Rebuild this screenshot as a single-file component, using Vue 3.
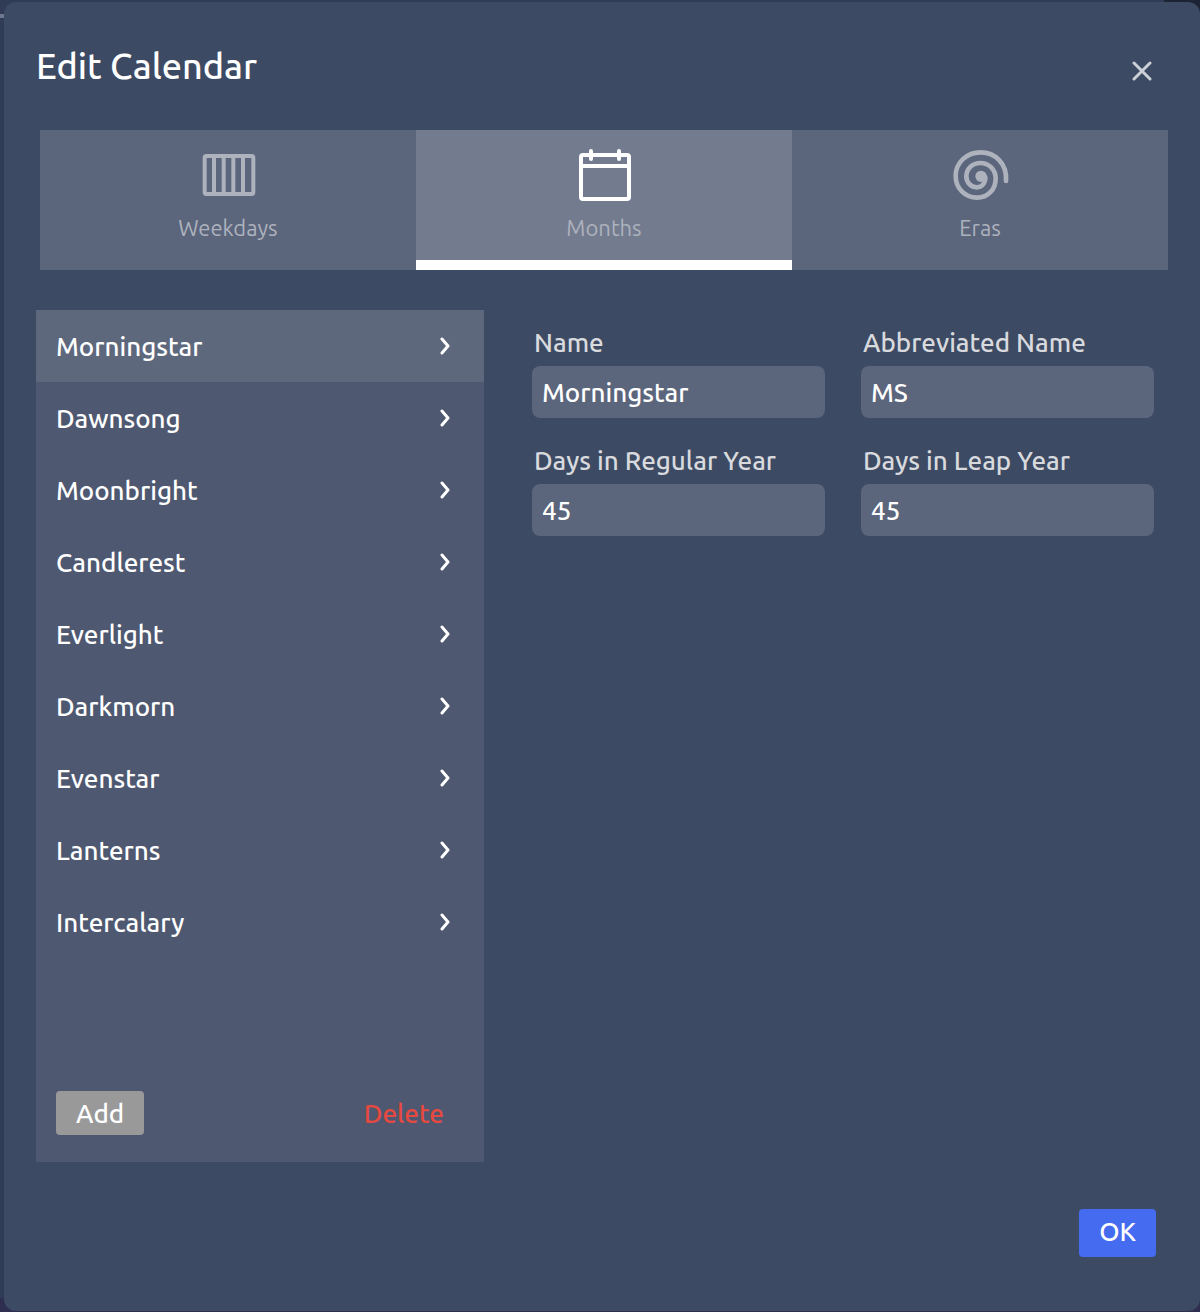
<script setup>
import { ref, computed } from 'vue'

const tabs = ['Weekdays', 'Months', 'Eras']
const activeTab = ref('Months')
const months = ref([
  { name: 'Morningstar', short: 'MS', days: '45', leap: '45' },
  { name: 'Dawnsong', short: 'DS', days: '45', leap: '45' },
  { name: 'Moonbright', short: 'MB', days: '45', leap: '45' },
  { name: 'Candlerest', short: 'CR', days: '45', leap: '45' },
  { name: 'Everlight', short: 'EL', days: '45', leap: '45' },
  { name: 'Darkmorn', short: 'DM', days: '45', leap: '45' },
  { name: 'Evenstar', short: 'ES', days: '45', leap: '45' },
  { name: 'Lanterns', short: 'LN', days: '45', leap: '45' },
  { name: 'Intercalary', short: 'IC', days: '5', leap: '6' },
])
const selected = ref(0)
const month = computed(() => months.value[selected.value])
const fields = [
  { key: 'name', label: 'Name' },
  { key: 'short', label: 'Abbreviated Name' },
  { key: 'days', label: 'Days in Regular Year' },
  { key: 'leap', label: 'Days in Leap Year' },
]

function addMonth() {
  months.value.push({ name: 'New Month', short: '', days: '30', leap: '30' })
  selected.value = months.value.length - 1
}
function deleteMonth() {
  if (months.value.length < 2) return
  months.value.splice(selected.value, 1)
  selected.value = Math.max(0, selected.value - 1)
}
</script>

<template>
  <div class="backdrop">
    <section class="dialog" role="dialog" aria-labelledby="dialog-title">
      <header class="head">
        <h1 id="dialog-title">Edit Calendar</h1>
        <button class="close" type="button" aria-label="Close">
          <svg viewBox="0 0 20 20" width="20" height="20"><path d="M2 2 18 18M18 2 2 18" /></svg>
        </button>
      </header>

      <nav class="tabs">
        <button
          v-for="tab in tabs"
          :key="tab"
          type="button"
          class="tab"
          :class="{ active: tab === activeTab }"
          @click="activeTab = tab"
        >
          <svg v-if="tab === 'Weekdays'" class="icon" viewBox="114 45 180 180">
            <rect x="134" y="78" width="146" height="114" rx="5" />
            <path d="M162 78V192M191 78V192M220 78V192M249 78V192" />
          </svg>
          <svg v-else-if="tab === 'Months'" class="icon" viewBox="132 45 180 180">
            <rect x="153" y="75" width="144" height="132" rx="6" />
            <path d="M153 108H297M183 63V87M267 63V87" stroke-linecap="round" />
          </svg>
          <svg v-else class="icon" viewBox="150 45 180 180">
            <path
              d="M318 153C322 100 285 67 242 67C200 67 167 98 167 138C167 175 195 203 231 203C264 203 287 178 287 146C287 119 267 99 241 99C217 99 199 117 199 139C199 158 213 172 230 172C246 172 256 160 256 142"
              stroke-linecap="round"
              stroke-width="14"
            />
            <circle class="dot" cx="243" cy="139" r="17" />
          </svg>
          <span>{{ tab }}</span>
        </button>
      </nav>

      <div class="body">
        <div class="side">
          <ul class="months">
            <li v-for="(item, i) in months" :key="i">
              <button type="button" class="row" :class="{ current: i === selected }" @click="selected = i">
                <span>{{ item.name }}</span>
                <svg viewBox="0 0 10 18" width="10" height="18"><path d="M2 2 8 9 2 16" /></svg>
              </button>
            </li>
          </ul>
          <div class="actions">
            <button type="button" class="add" @click="addMonth">Add</button>
            <button type="button" class="delete" @click="deleteMonth">Delete</button>
          </div>
        </div>

        <form class="fields" @submit.prevent>
          <div v-for="field in fields" :key="field.key" class="field">
            <label :for="field.key">{{ field.label }}</label>
            <input :id="field.key" v-model="month[field.key]" type="text" />
          </div>
        </form>
      </div>

      <footer class="foot">
        <button type="button" class="ok">OK</button>
      </footer>
    </section>
  </div>
</template>

<style>
body {
  margin: 0;
}
</style>

<style scoped>
* {
  box-sizing: border-box;
}
.backdrop {
  display: flex;
  min-height: 100vh;
  padding: 2px 0 1px 4px;
  background:
    linear-gradient(#1c2335, #1c2335) top right / 36px 16px no-repeat,
    linear-gradient(#6d788c, #6d788c) 0 14px / 4px 4px no-repeat,
    linear-gradient(#2e2e50, #2e2e50) bottom left / 100% 14px no-repeat,
    #303c56;
  color: #fff;
  font-family: Ubuntu, "Noto Sans", sans-serif;
  font-size: 26px;
  font-weight: 500;
  line-height: 32px;
}
button,
input {
  margin: 0;
  padding: 0;
  border: 0;
  background: none;
  color: inherit;
  font: inherit;
}
button {
  cursor: pointer;
}
svg {
  fill: none;
  stroke: currentColor;
}
.dialog {
  display: flex;
  flex: 1;
  flex-direction: column;
  min-width: 0;
  padding: 40px 32px 54px;
  border-radius: 12px;
  background: #3d4a63;
}
.head {
  display: flex;
  align-items: flex-start;
  justify-content: space-between;
  height: 50px;
}
h1 {
  margin: 0;
  font-size: 36px;
  font-weight: 500;
  line-height: 48px;
}
.close {
  display: flex;
  padding: 19px 16px 11px;
  color: #ccd0d7;
}
.close svg {
  stroke-width: 3;
  stroke-linecap: round;
}
.tabs {
  display: flex;
  margin: 38px 0 0 4px;
}
.tab {
  display: flex;
  flex: 1;
  flex-direction: column;
  align-items: center;
  height: 140px;
  padding-top: 15px;
  border-bottom: 10px solid transparent;
  background: #5b657b;
  color: #adb2bd;
  font-size: 22px;
  font-weight: 400;
}
.tab.active {
  border-bottom-color: #fff;
  background: #737b8e;
}
.tab span {
  margin-top: 7px;
}
.icon {
  width: 60px;
  height: 60px;
  stroke-width: 12;
}
.active .icon {
  color: #fff;
}
.dot {
  fill: currentColor;
  stroke: none;
}
.body {
  display: flex;
  flex: 1;
  gap: 48px;
  margin-top: 40px;
  padding-right: 14px;
}
.side {
  display: flex;
  flex: 0 0 448px;
  flex-direction: column;
  justify-content: space-between;
  background: #4e5870;
}
.months {
  margin: 0;
  padding: 0;
  list-style: none;
}
.row {
  display: flex;
  align-items: center;
  justify-content: space-between;
  width: 100%;
  height: 72px;
  padding: 0 34px 0 20px;
}
.row span {
  padding-top: 2px;
}
.row.current {
  background: #5e687d;
}
.row svg {
  stroke-width: 3;
  stroke-linecap: round;
  stroke-linejoin: round;
}
.actions {
  display: flex;
  align-items: center;
  justify-content: space-between;
  padding: 20px 40px 27px 20px;
}
.add {
  height: 44px;
  padding: 2px 20px 0;
  border-radius: 4px;
  background: #999;
}
.delete {
  padding-top: 2px;
  color: #e74940;
}
.fields {
  display: grid;
  flex: 1;
  grid-template-columns: repeat(2, minmax(0, 1fr));
  align-content: start;
  gap: 27px 36px;
  padding-top: 17px;
}
.field {
  display: flex;
  flex-direction: column;
  gap: 7px;
}
label {
  padding-left: 2px;
  color: #d8dade;
  white-space: nowrap;
}
input {
  width: 100%;
  height: 52px;
  padding: 0 10px;
  border-radius: 8px;
  background: #5b657b;
}
.foot {
  display: flex;
  justify-content: flex-end;
  margin-top: 47px;
  padding-right: 12px;
}
.ok {
  height: 48px;
  padding: 0 20px 2px;
  border-radius: 4px;
  background: #456bf0;
}
</style>
